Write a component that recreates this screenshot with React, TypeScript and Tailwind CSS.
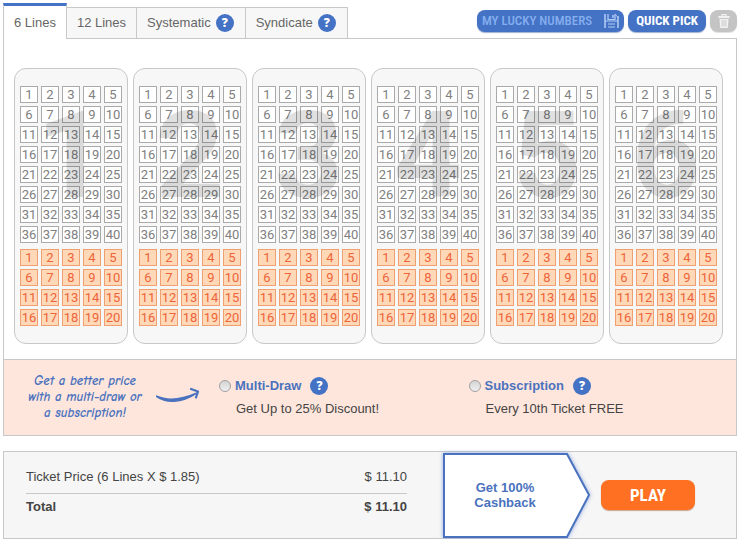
import clsx from 'clsx';

const LINES = [1, 2, 3, 4, 5, 6];
const MAIN_NUMBERS = Array.from({ length: 40 }, (_, i) => i + 1);
const BONUS_NUMBERS = Array.from({ length: 20 }, (_, i) => i + 1);

const TABS = [
    { label: '6 Lines', help: false },
    { label: '12 Lines', help: false },
    { label: 'Systematic', help: true },
    { label: 'Syndicate', help: true },
];

const condensed = 'font-["Roboto_Condensed","Liberation_Sans_Narrow","Liberation_Sans",sans-serif]';

function HelpIcon() {
    return (
        <span className="flex size-[18px] shrink-0 items-center justify-center rounded-full bg-[#4472c4] font-['Open_Sans',sans-serif] text-xs leading-none font-extrabold text-white">
            ?
        </span>
    );
}

function Tabs() {
    return (
        <nav className="flex items-end">
            {TABS.map((tab, i) => (
                <button
                    key={tab.label}
                    className={clsx(
                        'relative flex items-center gap-[5px] border-r border-[#c8c8c8]',
                        tab.help ? 'pr-[11px] pl-[10px]' : 'px-[10px]',
                        i === 0
                            ? '-mb-px h-9 border-l border-t-[3px] border-t-[#4472c4] bg-white'
                            : 'h-[31px] border-t bg-[#f7f7f7]',
                    )}
                >
                    {tab.label}
                    {tab.help && <HelpIcon />}
                </button>
            ))}
        </nav>
    );
}

function Toolbar() {
    return (
        <div className={clsx('flex gap-1 pt-[7px] text-[13px]', condensed)}>
            <button className="flex h-[22px] items-center gap-3 rounded-lg bg-[#4472c4] pr-[5px] pl-[5px] font-medium text-[#84aef0] shadow-[0_1px_1px_#9fb0cf]">
                MY LUCKY NUMBERS
                <svg viewBox="0 0 15 14" className="h-[14px] w-[15px]" fill="none" stroke="#b4cdf6">
                    <path d="M1 0V14M14 2V14" strokeWidth="1.5" />
                    <path d="M4 0V5.5H11V0M1 7H14" strokeWidth="1.2" />
                    <path d="M9 1V4" strokeWidth="1.5" />
                    <path d="M4 10H11M4 13H11" strokeWidth="1.2" />
                    <path d="M11 .5L14 3" />
                </svg>
            </button>
            <button className="h-[22px] rounded-lg bg-[#4472c4] px-2 font-bold text-white shadow-[0_1px_1px_#9fb0cf]">
                QUICK PICK
            </button>
            <button aria-label="Clear all" className="flex h-[22px] w-[27px] items-center justify-center rounded-lg bg-[#c4c4c4] shadow-[0_1px_1px_#ddd]">
                <svg viewBox="0 0 12 14" className="h-[14px] w-3" fill="none" stroke="#f1f1f1">
                    <path d="M4 2V.7H8V2" strokeWidth="1.2" />
                    <path d="M.5 3H11.5" strokeWidth="2" />
                    <path d="M1.5 5H10.5L9.8 14H2.2Z" fill="#f1f1f1" stroke="none" />
                    <path d="M4.2 6V12.5M6 6V12.5M7.8 6V12.5" stroke="#c4c4c4" strokeWidth=".8" />
                </svg>
            </button>
        </div>
    );
}

function LineCard({ line }: { line: number }) {
    return (
        <section className="relative rounded-xl border border-[#c8c8c8] bg-[#f7f7f7] px-[5px] py-[17px] font-[Roboto,sans-serif] text-[#808080]">
            <div className="grid grid-cols-5 gap-[3px]">
                {MAIN_NUMBERS.map((n) => (
                    <button key={n} className="h-[17px] border border-[#aaa] bg-white leading-[15px]">
                        {n}
                    </button>
                ))}
            </div>
            <div className="mt-[6px] grid grid-cols-5 gap-[3px]">
                {BONUS_NUMBERS.map((n) => (
                    <button key={n} className="h-[17px] border border-[#f0a070] bg-[#ffd8b8] leading-[15px] text-[#ee6438]">
                        {n}
                    </button>
                ))}
            </div>
            <span className="pointer-events-none absolute inset-x-0 top-[27px] text-center text-[120px] leading-none font-bold text-black/12">
                {line}
            </span>
        </section>
    );
}

function Offer({ id, title, text }: { id: string; title: string; text: string }) {
    return (
        <div className="flex-1">
            <div className="flex items-center gap-1">
                <input
                    type="radio"
                    name="offer"
                    id={id}
                    className="size-3 appearance-none rounded-full border border-[#a0a0a0] bg-linear-to-b from-[#d4d4d4] to-[#f0f0f0]"
                />
                <label htmlFor={id} className="mr-[5px] font-bold text-[#4a72be]">
                    {title}
                </label>
                <HelpIcon />
            </div>
            <p className="mt-[5px] pl-[17px]">{text}</p>
        </div>
    );
}

function Promo() {
    return (
        <div className="flex h-[76px] border-t border-[#c8c8c8] bg-[#ffe6dc] pl-[22px]">
            <p className="mt-[13px] w-[118px] text-center font-['Comic_Neue','Comic_Sans_MS',cursive] text-[13px] leading-4 font-bold whitespace-nowrap text-[#4a72be] italic">
                Get a better price
                <br />
                with a multi-draw or
                <br />a subscription!
            </p>
            <svg viewBox="0 0 44 18" className="mt-[26px] ml-3 h-[18px] w-11 shrink-0" fill="none" stroke="#4a72be">
                <path d="M0 10C9 17 25 18 41 7C25 14 11 15 0 10Z" fill="#4a72be" strokeWidth="1.4" />
                <path d="M35 3l7 2.5l-2 6" strokeWidth="2.2" strokeLinecap="round" strokeLinejoin="round" />
            </svg>
            <div className="mt-[17px] ml-[19px] flex flex-1 pr-[18px]">
                <Offer id="multi-draw" title="Multi-Draw" text="Get Up to 25% Discount!" />
                <Offer id="subscription" title="Subscription" text="Every 10th Ticket FREE" />
            </div>
        </div>
    );
}

function Summary() {
    return (
        <footer className="mt-[15px] flex h-[88px] items-center border border-[#c8c8c8] bg-[#f6f6f6] pl-[22px]">
            <table className="mb-2 flex-1 border-collapse">
                <tbody>
                    <tr className="h-[31px] border-b border-[#c8c8c8]">
                        <td>Ticket Price (6 Lines X $ 1.85)</td>
                        <td className="text-right">$ 11.10</td>
                    </tr>
                    <tr className="h-[27px] font-bold">
                        <td>Total</td>
                        <td className="text-right">$ 11.10</td>
                    </tr>
                </tbody>
            </table>
            <div className="relative ml-9 flex h-[86px] w-[148px] items-center">
                <svg viewBox="0 0 148 86" className="absolute inset-0 overflow-visible drop-shadow-[0_0_2px_#8fa8dc]">
                    <path d="M1 2H124L146 43L124 85H1Z" fill="#fff" stroke="#4a72be" strokeWidth="2" />
                </svg>
                <p className="relative w-[124px] text-center leading-[15px] font-bold text-[#4a72be]">
                    Get 100%
                    <br />
                    Cashback
                </p>
            </div>
            <button className={clsx('mr-[41px] ml-[10px] h-[30px] w-[94px] rounded-lg bg-[#ff7022] text-[17px] font-bold text-white shadow-[0_1px_1px_#c9a58f]', condensed)}>
                PLAY
            </button>
        </footer>
    );
}

export default function App() {
    return (
        <main className="bg-white px-[3px] pt-[3px] font-['Liberation_Sans',sans-serif] text-[13px] leading-[18px] text-[#444]">
            <header className="flex items-start justify-between text-[#666]">
                <Tabs />
                <Toolbar />
            </header>
            <div className="border border-[#c8c8c8]">
                <div className="grid grid-cols-6 gap-[5px] pt-[29px] pr-[13px] pb-[15px] pl-[10px]">
                    {LINES.map((line) => (
                        <LineCard key={line} line={line} />
                    ))}
                </div>
                <Promo />
            </div>
            <Summary />
        </main>
    );
}
